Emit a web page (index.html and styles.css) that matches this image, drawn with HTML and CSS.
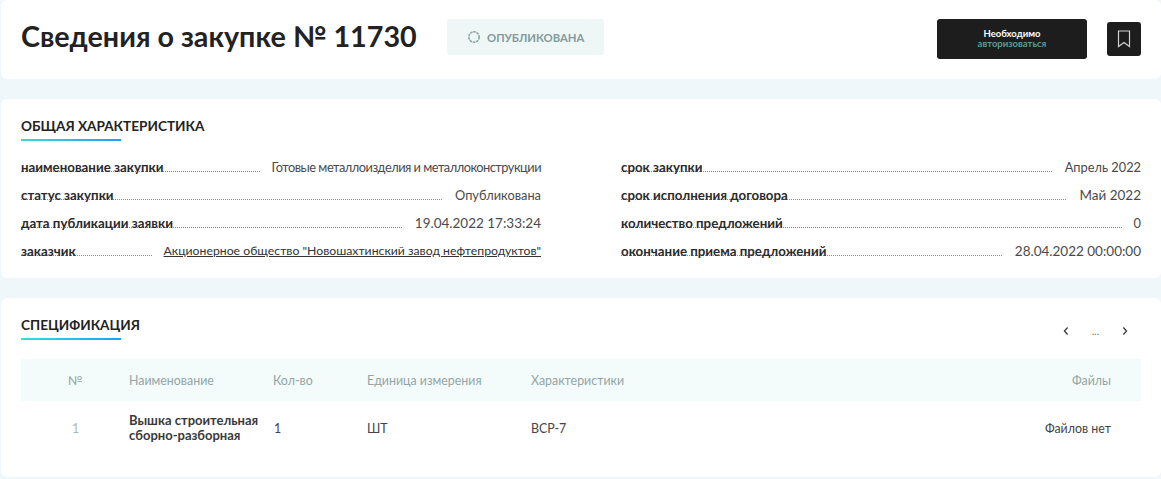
FILE: index.html
```html
<!DOCTYPE html>
<html lang="ru">
<head>
<meta charset="utf-8">
<title>Сведения о закупке № 11730</title>
<link rel="stylesheet" href="styles.css">
</head>
<body>
<header class="card head">
  <h1 class="title">Сведения о закупке № 11730</h1>
  <div class="badge">
    <svg class="spin" width="14" height="14" viewBox="0 0 14 14"><circle cx="7" cy="7" r="5.2" fill="none" stroke="#8fa5a5" stroke-width="1.6" stroke-dasharray="2.6 .7"/></svg>
    <span>ОПУБЛИКОВАНА</span>
  </div>
  <button class="auth"><span class="auth-a">Необходимо</span><span class="auth-b">авторизоваться</span></button>
  <button class="mark">
    <svg width="14" height="18" viewBox="0 0 14 18"><path d="M1.5 1h11v15.5L7 12.6 1.5 16.5z" fill="none" stroke="#cfd3d3" stroke-width="1.2"/></svg>
  </button>
</header>

<section class="card info">
  <h2 class="sect">ОБЩАЯ ХАРАКТЕРИСТИКА</h2>
  <div class="cols">
    <div class="col">
      <div class="row"><span class="lab">наименование закупки</span><span class="val dense">Готовые металлоизделия и металлоконструкции</span></div>
      <div class="row"><span class="lab">статус закупки</span><span class="val">Опубликована</span></div>
      <div class="row"><span class="lab">дата публикации заявки</span><span class="val date">19.04.2022 17:33:24</span></div>
      <div class="row"><span class="lab">заказчик</span><a class="val link" href="#">Акционерное общество "Новошахтинский завод нефтепродуктов"</a></div>
    </div>
    <div class="col">
      <div class="row"><span class="lab">срок закупки</span><span class="val">Апрель 2022</span></div>
      <div class="row"><span class="lab">срок исполнения договора</span><span class="val date">Май 2022</span></div>
      <div class="row"><span class="lab">количество предложений</span><span class="val">0</span></div>
      <div class="row"><span class="lab">окончание приема предложений</span><span class="val date">28.04.2022 00:00:00</span></div>
    </div>
  </div>
</section>

<section class="card spec">
  <div class="spec-top">
    <h2 class="sect">СПЕЦИФИКАЦИЯ</h2>
    <nav class="pager">
      <svg width="6" height="10" viewBox="0 0 6 10"><path d="M4.6 1.5 1.4 5l3.2 3.5" fill="none" stroke="#333" stroke-width="1.2"/></svg>
      <span class="dots">...</span>
      <svg width="6" height="10" viewBox="0 0 6 10"><path d="M1.4 1.5 4.6 5 1.4 8.5" fill="none" stroke="#333" stroke-width="1.2"/></svg>
    </nav>
  </div>
  <div class="grid thead">
    <span class="num">№</span><span>Наименование</span><span>Кол-во</span><span>Единица измерения</span><span>Характеристики</span><span class="end">Файлы</span>
  </div>
  <div class="grid tbody">
    <span class="num pale">1</span><strong class="name">Вышка строительная сборно-разборная</strong><span class="qty">1</span><span>ШТ</span><span>ВСР-7</span><span class="end">Файлов нет</span>
  </div>
</section>
</body>
</html>
```
FILE: styles.css
```css
* { box-sizing: border-box; }
html, body { margin: 0; }
body {
  background: #eff7fa;
  height: 479px;
  overflow: hidden;
  padding-left: 1px;
  font-family: "Lato", "Open Sans", sans-serif;
  color: #333;
  font-size: 13px;
}
.card {
  background: #fff;
  padding: 0 20px;
  margin-bottom: 20px;
}
.head {
  height: 79px;
  display: flex;
  align-items: flex-start;
  border-radius: 6px;
}
.title {
  margin: 16px 0 0;
  font-size: 28.7px;
  line-height: 40px;
  font-weight: 700;
  color: #222;
  width: 426px;
  white-space: nowrap;
}
.badge {
  margin-top: 19px;
  width: 157px;
  height: 36px;
  background: #eff6f6;
  border-radius: 3px;
  display: flex;
  align-items: center;
  padding-left: 20px;
  gap: 6px;
  font-size: 11.3px;
  font-weight: 700;
  color: #839b9b;
}
.auth {
  margin: 19px 0 0 333px;
  width: 150px;
  height: 40px;
  border: 0;
  border-radius: 3px;
  background: #1d1d1d;
  font-family: inherit;
  display: flex;
  flex-direction: column;
  align-items: center;
  justify-content: center;
  padding: 0 0 2px;
}
.auth-a { color: #fff; font-size: 9.5px; font-weight: 700; line-height: 11px; }
.auth-b { color: #5f9a9a; font-size: 9.5px; font-weight: 700; line-height: 10px; }
.mark {
  margin: 22px 0 0 20px;
  width: 34px;
  height: 34px;
  border: 0;
  border-radius: 3px;
  background: #1d1d1d;
  padding: 0;
  display: flex;
  align-items: center;
  justify-content: center;
}
.info { height: 179px; border-radius: 6px; padding-top: 18px; }
.sect {
  margin: 0;
  display: block;
  width: max-content;
  min-width: 100px;
  font-size: 13.6px;
  line-height: 18px;
  font-weight: 700;
  color: #222;
}
.sect::after {
  content: "";
  display: block;
  width: 100px;
  height: 2px;
  margin-top: 4px;
  background: linear-gradient(90deg, #3bdcd6, #229cf5);
}
.cols {
  display: grid;
  grid-template-columns: 520px 520px;
  column-gap: 80px;
  margin-top: 12px;
}
.row {
  height: 28px;
  display: flex;
  justify-content: space-between;
  align-items: center;
  white-space: nowrap;
  background-image: repeating-linear-gradient(90deg, #8a8a8a 0 1px, transparent 1px 2px);
  background-size: 100% 1px;
  background-position: 0 18px;
  background-repeat: no-repeat;
}
.lab { font-size: 13.3px; font-weight: 700; color: #2b2b2b; }
.val { background: #fff; padding-left: 12px; color: #4a4a4a; line-height: 20px; font-size: 12.8px; }
.dense { letter-spacing: -.5px; }
.date { font-size: 13.5px; }
.link { color: #333; text-decoration: underline; font-size: 12.25px; }
.spec { height: 179px; border-radius: 6px; padding-top: 18px; }
.spec-top { display: flex; justify-content: space-between; align-items: flex-start; }
.pager {
  margin: 10px 13px 0 0;
  display: flex;
  align-items: center;
  gap: 23px;
  font-size: 10px;
  line-height: 10px;
}
.dots { color: #7a6a3a; }
.grid {
  display: grid;
  grid-template-columns: 108px 144px 94px 164px 1fr 120px;
  align-items: center;
  font-size: 12.4px;
}
.thead {
  margin-top: 19px;
  height: 42px;
  background: #f3fbfb;
  color: #93a5a5;
}
.tbody { height: 54px; color: #444; }
.num { padding-left: 47px; }
.pale { color: #b0b8b8; padding-left: 51px; }
.qty { padding-left: 1px; }
.name { font-weight: 700; font-size: 13px; width: 130px; line-height: 15px; color: #3a3a3a; }
.end { text-align: right; padding-right: 30px; }
```
